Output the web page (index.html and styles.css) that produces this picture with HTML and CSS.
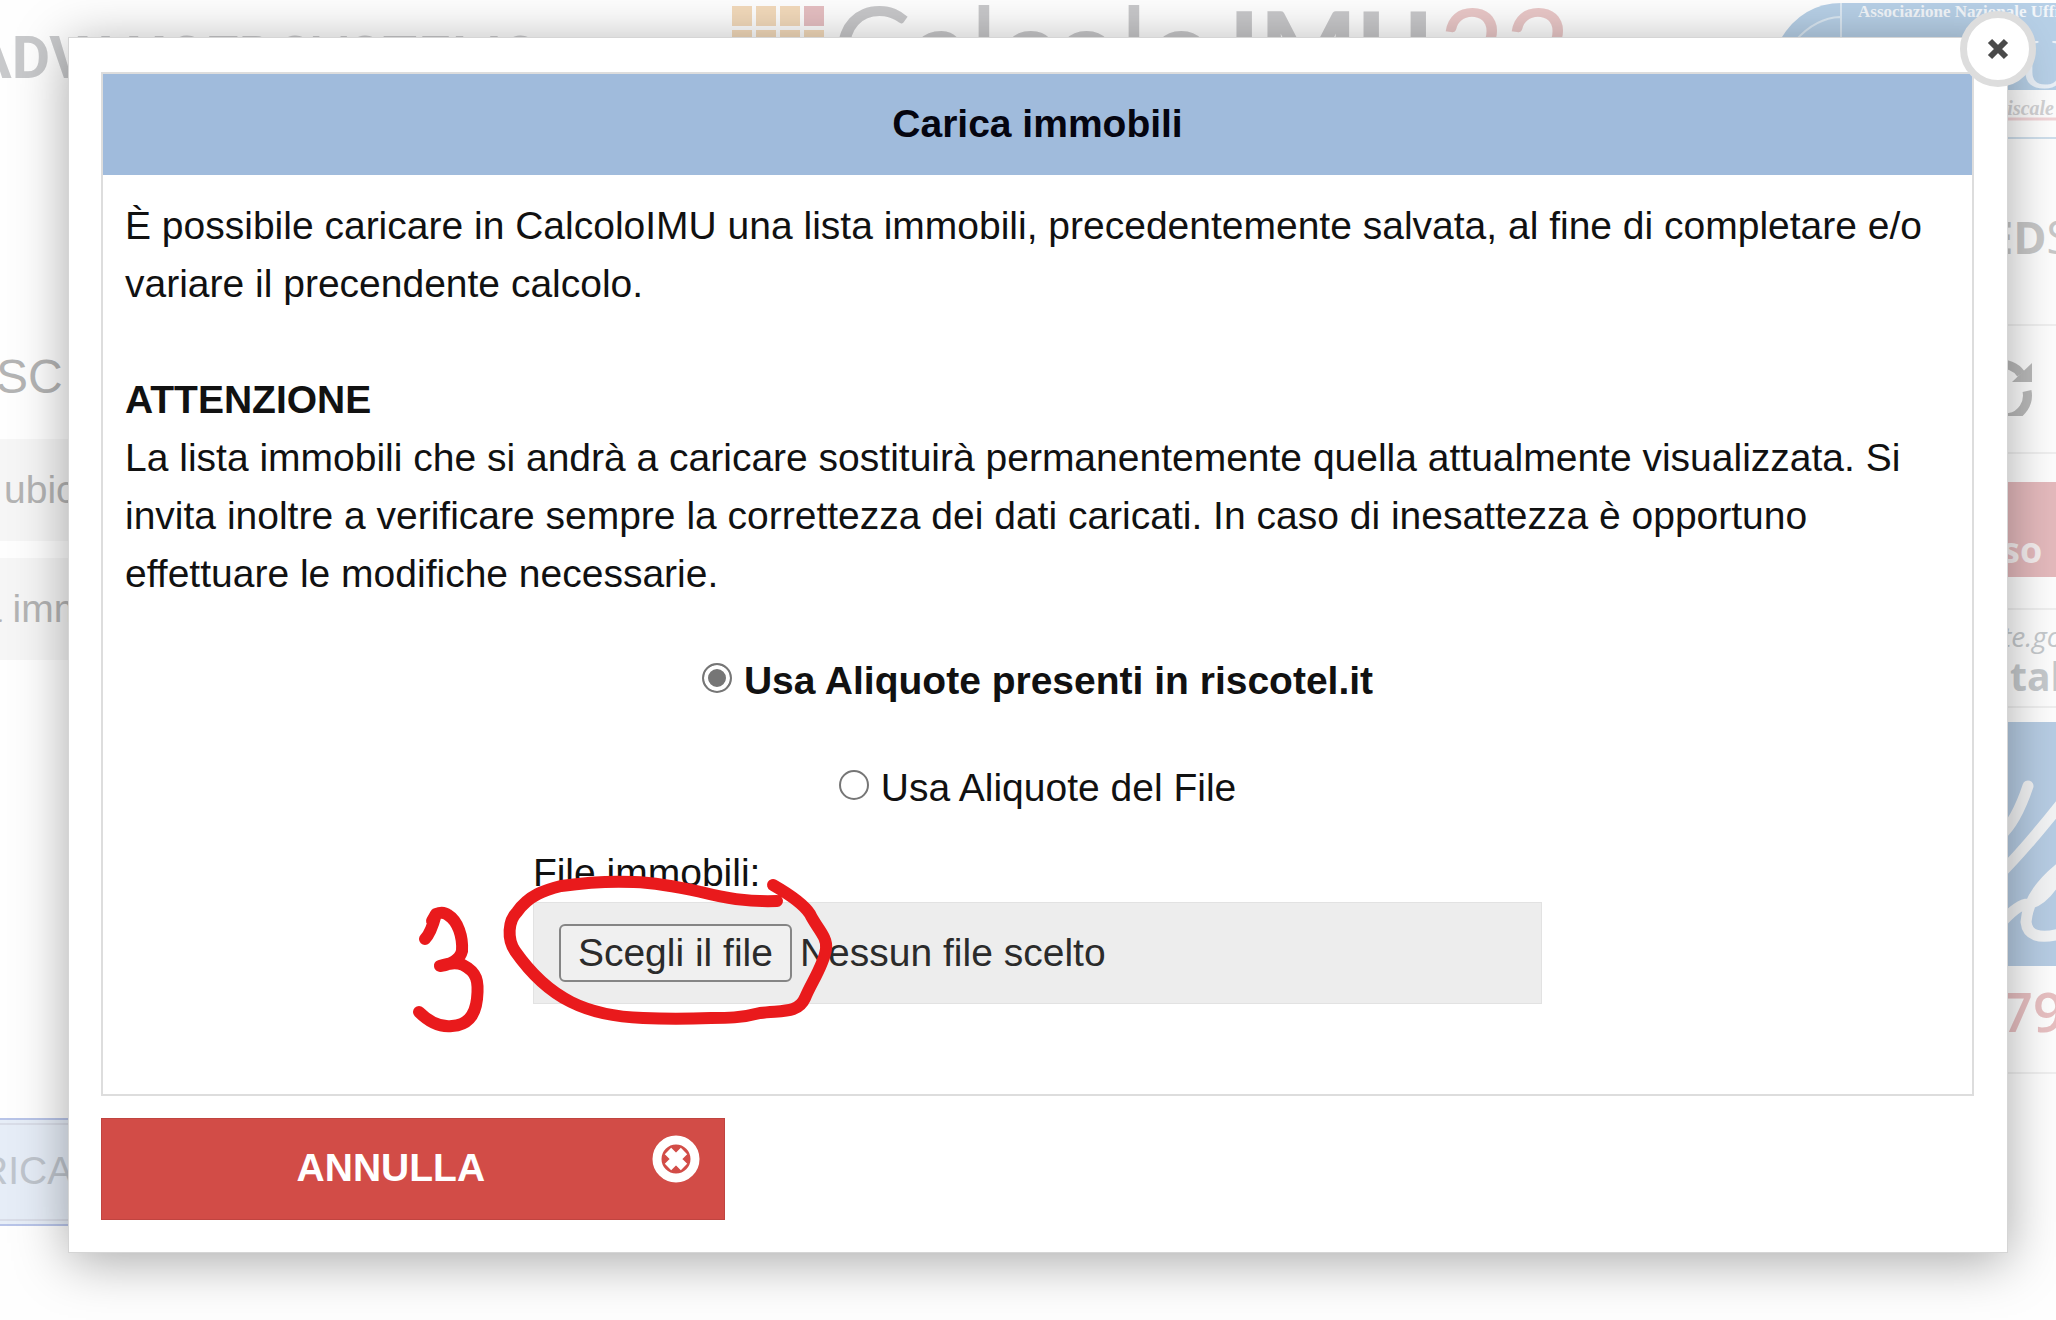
FILE: index.html
```html
<!DOCTYPE html>
<html lang="it">
<head>
  <meta charset="UTF-8">
  <title>CalcoloIMU - Carica immobili</title>
  <meta name="viewport" content="width=device-width, initial-scale=1.0">
  <link rel="stylesheet" href="styles.css">
</head>
<body>

  <!-- Pagina sotto la finestra -->
  <div class="page" aria-hidden="true">
    <header class="top">
      <div class="brand"><b>ADVANCED</b>SYSTEMS</div>
      <div class="logo">
        <svg class="logo-grid" width="92" height="92" viewBox="0 0 92 92">
          <g fill="#f3dabb">
            <rect x="0" y="0" width="20" height="20"/><rect x="24" y="0" width="20" height="20"/><rect x="48" y="0" width="20" height="20"/>
            <rect x="0" y="24" width="20" height="20"/><rect x="24" y="24" width="20" height="20"/><rect x="48" y="24" width="20" height="20"/><rect x="72" y="24" width="20" height="20"/>
          </g>
          <rect x="72" y="0" width="20" height="20" fill="#e6bfc2"/>
        </svg>
        <span class="logo-light">Calcolo</span>
        <span class="logo-black">IMU</span>
        <span class="logo-year">22</span>
      </div>
      <svg class="anutel" width="276" height="140" viewBox="0 0 276 140">
        <path d="M0 40 Q22 3 62 3 H276 V90 H0 Z" fill="#b7d0e7"/>
        <path d="M16 40 Q36 18 60 17 M61 3 V40" fill="none" stroke="#dbe8f3" stroke-width="2"/>
        <text x="78" y="17" class="anutel-name">Associazione Nazionale Uffici</text>
        <text x="238" y="88" class="anutel-big">U</text>
        <text x="214" y="115" class="anutel-sub">Fiscale</text>
        <path d="M220 119 H276" stroke="#f2d5d8" stroke-width="3"/>
        <path d="M220 138 H276" stroke="#cfdfec" stroke-width="2"/>
      </svg>
    </header>

    <div class="columns">
      <main class="content">
        <h2>SC</h2>
        <div class="row">ubic</div>
        <div class="row row-imm">a imm</div>
        <div class="carica">RICA</div>
      </main>
      <aside class="side">
        <div class="feeds"><b>ED</b>S</div>
        <div class="refresh">
          <svg width="60" height="56" viewBox="0 0 60 56">
            <path d="M7 24 A22 22 0 0 1 47 14 M53 31 A22 22 0 0 1 9 40" fill="none" stroke="#bbb" stroke-width="9"/>
            <path d="M58 3 V22 H38 Z" fill="#bbb"/>
          </svg>
        </div>
        <div class="accesso">so</div>
        <div class="portale"><i>te.go</i><b>tal</b></div>
        <svg class="script-logo" width="100" height="244" viewBox="0 0 100 244">
          <rect width="100" height="244" fill="#b7cde4"/>
          <path d="M44 152 Q70 126 108 78 M44 114 Q60 100 72 64 M44 202 Q62 182 72 182 Q90 178 104 150 M104 146 Q72 172 70 200 Q72 220 104 212" fill="none" stroke="#f3f4f5" stroke-width="11" stroke-linecap="round"/>
        </svg>
        <div class="phone">79</div>
      </aside>
    </div>
  </div>

  <!-- Finestra "Carica immobili" -->
  <div class="modal" role="dialog" aria-labelledby="titolo">
    <button type="button" class="close" aria-label="Chiudi">
      <svg width="22" height="22" viewBox="0 0 22 22">
        <path d="M3 3 L19 19 M19 3 L3 19" stroke="#4a4a4a" stroke-width="6"/>
      </svg>
    </button>

    <form>
      <section class="panel">
        <h1 id="titolo">Carica immobili</h1>
        <p class="text">
          È possibile caricare in CalcoloIMU una lista immobili, precedentemente salvata, al fine di completare e/o variare il precendente calcolo.<br>
          <br>
          <strong>ATTENZIONE</strong><br>
          La lista immobili che si andrà a caricare sostituirà permanentemente quella attualmente visualizzata. Si invita inoltre a verificare sempre la correttezza dei dati caricati. In caso di inesattezza è opportuno effettuare le modifiche necessarie.
        </p>

        <div class="options">
          <label class="option selected"><input type="radio" name="aliquote" value="riscotel" checked> Usa Aliquote presenti in riscotel.it</label>
          <label class="option"><input type="radio" name="aliquote" value="file"> Usa Aliquote del File</label>
        </div>

        <div class="file-group">
          <label for="file-immobili">File immobili:</label>
          <div class="file-field">
            <input type="file" id="file-immobili">
            <span class="file-button">Scegli il file</span>
            <span id="file-name">Nessun file scelto</span>
          </div>
          <svg class="mark" width="450" height="170" viewBox="0 0 450 170">
            <path d="M24 68 Q30 62 35 43 L31 50 M35 43 Q42 40 47 44 C57 50 62 66 61 80 Q58 92 39 95 Q54 90 62 94 C76 101 78 110 76 128 C74 146 65 154 51 155 Q34 157 18 141"/>
            <path d="M372 14 C386 22 402 32 409 43 C415 56 427 66 425 78 C423 94 410 112 404 127 C397 143 380 139 359 142 C340 147 326 147 310 147 C285 148 264 148 242 147 C212 146 188 140 170 131 C148 120 128 100 114 80 C106 68 107 50 116 41 C128 24 144 19 160 15 C188 11 212 10 233 11 C260 12 282 17 300 21 C324 27 344 31 376 30"/>
          </svg>
        </div>
      </section>

      <button type="button" class="annulla">
        <span>ANNULLA</span>
        <svg width="48" height="48" viewBox="0 0 48 48">
          <circle cx="24" cy="24" r="19" fill="none" stroke="#fff" stroke-width="9"/>
          <path d="M16 16 L32 32 M32 16 L16 32" stroke="#fff" stroke-width="9"/>
        </svg>
      </button>
    </form>
  </div>

  <script>
  document.getElementById("file-immobili").addEventListener("change", function () {
    const nome = this.files.length ? this.files[0].name : "Nessun file scelto";
    document.getElementById("file-name").textContent = nome;
  });
  </script>

</body>
</html>
```
FILE: styles.css
```css
* {
  box-sizing: border-box;
}

body {
  margin: 0;
  height: 100vh;
  overflow: hidden;
  position: relative;
  background: #fefefe;
  color: #111;
  font-family: "Liberation Sans", Arial, sans-serif;
  font-size: 39px;
  line-height: 58px;
}

h1, h2, p {
  margin: 0;
}

/* Pagina di sfondo */
.page {
  height: 100%;
  overflow: hidden;
  color: #b4b4b4;
  white-space: nowrap;
}

.top {
  display: flex;
  justify-content: space-between;
  align-items: flex-start;
  height: 140px;
}

.brand {
  margin-left: -28px;
  padding-top: 22px;
  font-family: Roboto, sans-serif;
  font-size: 59px;
  line-height: 72px;
  color: #c8c9cb;
}

.logo {
  display: flex;
  align-items: flex-start;
}

.logo-grid {
  margin: 6px 8px 0 0;
}

.logo-light,
.logo-black,
.logo-year {
  font-family: Lato, sans-serif;
  font-size: 120px;
  line-height: 94px;
  color: #c8c8ca;
}

.logo-light {
  font-weight: 400;
  font-size: 118px;
}

.logo-black {
  font-size: 102px;
  font-weight: 900;
  margin-left: 14px;
}

.logo-year {
  margin-left: 6px;
  margin-right: 14px;
  font-size: 114px;
  color: #eac8c8;
}

.anutel {
  flex: none;
}

.anutel-name {
  font: bold 17px "Liberation Serif", serif;
  fill: #f2f6fa;
}

.anutel-big {
  font: 72px "Liberation Serif", serif;
  fill: #eaf1f8;
}

.anutel-sub {
  font: italic bold 20px "Liberation Serif", serif;
  fill: #d2d2d4;
}

.columns {
  display: flex;
  justify-content: space-between;
}

.content {
  width: 50%;
  padding-top: 208px;
}

.content h2 {
  margin-left: -4px;
  font-size: 48px;
  font-weight: 400;
  margin-bottom: 33px;
}

.row {
  height: 102px;
  margin-bottom: 17px;
  padding: 22px 4px;
  background: #f6f6f6;
}

.row-imm {
  padding-left: 0;
  text-indent: -20px;
}

.carica {
  height: 108px;
  margin-top: 458px;
  margin-left: -10px;
  padding: 22px 0;
  text-indent: -12px;
  border: 2px solid #b8c4e8;
  outline: 2px solid #d9dde8;
  outline-offset: -7px;
  background: #e6edf7;
  color: #bfc5cd;
}

.side {
  width: 100px;
  padding-top: 68px;
  font-family: "Open Sans", sans-serif;
}

.side > div {
  padding-left: 46px;
  border-bottom: 2px solid #f0f0f0;
}

.side .feeds {
  height: 118px;
  padding-left: 32px;
  font-size: 45px;
  color: #c8c8c8;
}

.side .refresh {
  height: 128px;
  padding: 34px 0 0 18px;
}

.side .accesso {
  height: 95px;
  margin-top: 28px;
  padding-top: 39px;
  font-weight: 700;
  font-size: 36px;
  background: #e5babd;
  color: #f6eff0;
  border: none;
}

.side .portale {
  display: flex;
  flex-direction: column;
  height: 100px;
  margin-top: 31px;
  padding-top: 6px;
  border-top: 2px solid #f0f0f0;
  font-size: 28px;
  line-height: 40px;
  color: #c6cacd;
}

.portale b {
  padding-left: 8px;
  font-size: 39px;
}

.script-logo {
  display: block;
  margin-top: 14px;
}

.side .phone {
  height: 108px;
  padding-top: 16px;
  font-size: 54px;
  font-weight: 600;
  color: #e8c0c2;
}

/* Finestra */
.modal {
  position: absolute;
  top: 37px;
  left: 68px;
  right: 48px;
  padding: 34px 33px 32px 32px;
  border: 1px solid #d5d5d5;
  background: #fff;
  box-shadow: 0 8px 50px rgba(0, 0, 0, 0.34);
}

.close {
  position: absolute;
  top: -27px;
  right: -29px;
  width: 76px;
  height: 76px;
  padding: 0;
  display: flex;
  align-items: center;
  justify-content: center;
  border: 7px solid #ddd;
  border-radius: 50%;
  background: #fff;
  cursor: pointer;
}

.panel {
  padding-bottom: 90px;
  border: 2px solid #ddd;
}

.panel h1 {
  padding: 21px 0 22px;
  font-size: 39px;
  line-height: 58px;
  text-align: center;
  background: #a0bbdc;
  color: #050510;
}

.text {
  padding: 22px 22px 0;
}

.options {
  display: flex;
  flex-direction: column;
  align-items: center;
  gap: 49px;
  padding: 49px 0 27px;
}

.option {
  display: flex;
  align-items: center;
  gap: 12px;
}

.option.selected {
  font-weight: 700;
}

.option input {
  appearance: none;
  width: 30px;
  height: 30px;
  margin: 0 0 6px;
  border: 2px solid #767676;
  border-radius: 50%;
  background: #fff;
}

.option input:checked {
  background: #767676;
  box-shadow: inset 0 0 0 4px #fff;
}

.file-group {
  position: relative;
  width: 54%;
  margin: 0 auto;
}

.file-group label {
  display: block;
}

.file-field {
  position: relative;
  display: flex;
  align-items: center;
  gap: 8px;
  height: 102px;
  padding: 0 25px;
  border: 1px solid #e2e2e2;
  background: #ededed;
  color: #2b2b2b;
}

.file-field input {
  position: absolute;
  inset: 0;
  width: 100%;
  opacity: 0;
  cursor: pointer;
}

.file-button {
  padding: 0 17px;
  border: 2px solid #858585;
  border-radius: 6px;
  background: #f0f0f0;
  line-height: 54px;
}

/* Segno rosso a mano */
.mark {
  position: absolute;
  left: -132px;
  top: 27px;
  pointer-events: none;
  fill: none;
  stroke: #e91a1c;
  stroke-width: 12;
  stroke-linecap: round;
  stroke-linejoin: round;
}

.annulla {
  display: flex;
  align-items: flex-start;
  width: 33.3%;
  height: 102px;
  margin-top: 22px;
  padding: 16px 24px 16px 28px;
  border: 1px solid #c04440;
  background: #d24c47;
  color: #fff;
  font: bold 39px/66px "Liberation Sans", Arial, sans-serif;
  cursor: pointer;
}

.annulla span {
  flex: 1;
  text-align: center;
}
```
